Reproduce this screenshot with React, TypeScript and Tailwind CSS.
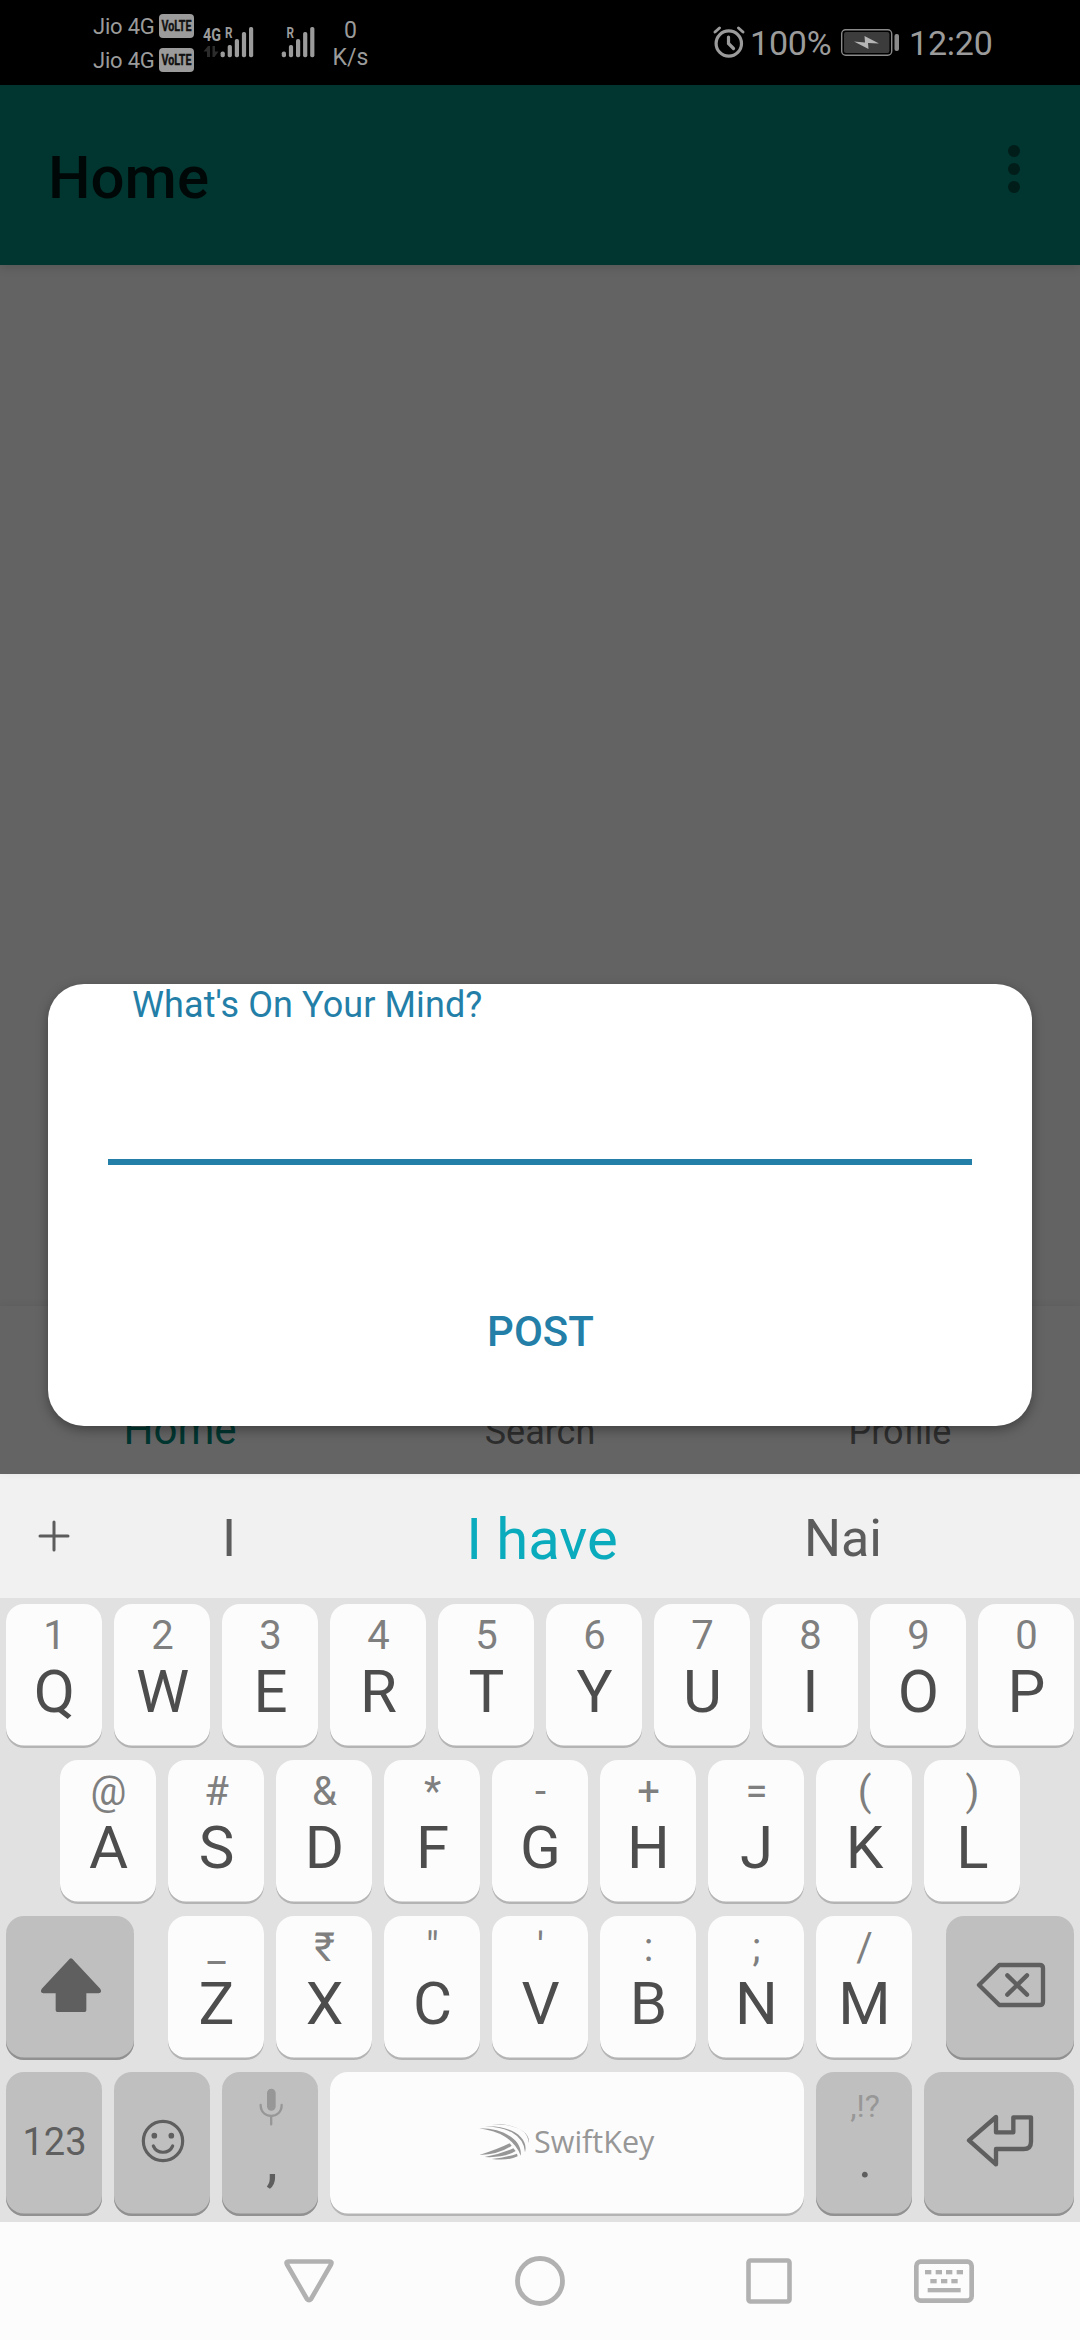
import React from "react";
import clsx from "clsx";

const bars = [51.5, 45, 39, 32, 27];

function Bars({ x }: { x: number }) {
  return (
    <>
      {bars.map((y, i) => (
        <rect key={i} x={x + i * 7.1} y={y} width={4.2} height={57.3 - y} rx={1.8} />
      ))}
    </>
  );
}

function Carrier() {
  return (
    <div className="flex h-[34px] items-center justify-between">
      <span className="text-[22px] leading-[34px] tracking-[-0.2px] whitespace-nowrap">Jio 4G</span>
      <svg className="mt-[-2px] h-6 w-[35px] shrink-0 overflow-visible" viewBox="0 0 35 24">
        <rect width="35" height="24" rx="4" fill="#9b9b9b" />
        <text x="2.500" y="17" fontSize="14.500" fontWeight="700" fill="#111" stroke="#111" strokeWidth="0.400" textLength="30" lengthAdjust="spacingAndGlyphs">
          VoLTE
        </text>
      </svg>
    </div>
  );
}

function StatusBar() {
  return (
    <header className="flex h-[85px] shrink-0 bg-black pl-[93px] text-[#9b9b9b]">
      <div className="flex w-[101px] shrink-0 flex-col pt-[10px]">
        <Carrier />
        <Carrier />
      </div>
      <svg className="h-[85px] w-[126px]" viewBox="194 0 126 85" fill="#9b9b9b">
        <text x="203" y="40.500" fontSize="19" fontWeight="700" textLength="18" lengthAdjust="spacingAndGlyphs">4G</text>
        <text x="225" y="37.500" fontSize="15" fontWeight="700" textLength="7.500" lengthAdjust="spacingAndGlyphs">R</text>
        <path d="M203.500 51.500l4.500-5.500h2v11h-3v-5.500zM212.500 46h2.500v5.500h3.500l-4 5.500h-2z" fill="#2c2c2c" />
        <Bars x={220.6} />
        <text x="286.500" y="37.500" fontSize="15" fontWeight="700" textLength="7.500" lengthAdjust="spacingAndGlyphs">R</text>
        <Bars x={281.8} />
      </svg>
      <div className="flex w-[61px] flex-col pt-[17px] text-center text-[23px] leading-[27px]">
        <span>0</span>
        <span>K/s</span>
      </div>
      <div className="ml-auto flex h-[85px] items-center pr-[86px] text-[34px] leading-[80px]">
        <svg className="h-[85px] w-[34px]" viewBox="712 0 34 85" fill="none" stroke="#9b9b9b" strokeLinecap="round">
          <circle cx="728.800" cy="43.500" r="12.700" strokeWidth="3.200" />
          <path d="M728.500 37v6.500l5 5" strokeWidth="3.200" />
          <path d="M715 32l4.500-4M738.500 28l4.500 4" strokeWidth="3" />
        </svg>
        <span className="ml-[4px] w-[90px] pt-[1px] tracking-[-0.200px]">100%</span>
        <svg className="h-[85px] w-[60px]" viewBox="840 0 60 85">
          <rect x="841.700" y="29.700" width="50" height="25.600" rx="4" fill="none" stroke="#8a8a8a" strokeWidth="1.400" />
          <rect x="844" y="32" width="45.400" height="21" rx="2" fill="#3c3c3c" />
          <path d="M854 41.500l11 1-.5-6.500 14.500 7.500-11-.5.500 6z" fill="#b5b5b5" />
          <rect x="894.500" y="34" width="4.500" height="17" rx="2" fill="#8a8a8a" />
        </svg>
        <span className="ml-[9px] w-[85px] pt-[1px] tracking-[-0.200px]">12:20</span>
      </div>
    </header>
  );
}

function AppBar() {
  return (
    <div className="z-10 flex h-[180px] shrink-0 items-center justify-between bg-[#013630] pr-[60px] pl-[48px] shadow-[0_2px_10px_rgba(0,0,0,0.15)]">
      <h1 className="mt-[5px] text-[60px] leading-none font-medium text-[#000807]">Home</h1>
      <div className="mb-[12px] flex flex-col gap-[6px]">
        <i className="size-3 rounded-full bg-[#001d19]" />
        <i className="size-3 rounded-full bg-[#001d19]" />
        <i className="size-3 rounded-full bg-[#001d19]" />
      </div>
    </div>
  );
}

function PostDialog() {
  return (
    <div className="absolute top-[719px] left-[48px] flex h-[442px] w-[984px] flex-col rounded-[36px] bg-white px-[60px] text-[#237fa8] shadow-[0_4px_12px_rgba(0,0,0,0.35)]">
      <label className="h-[175px] pl-[24px] text-[36px] leading-[42px] tracking-[0.100px]">What's On Your Mind?</label>
      <div className="h-[6px] bg-[#237fa8]" />
      <button className="mt-[142px] pl-[1px] text-[42px] leading-[50px] font-medium">POST</button>
    </div>
  );
}

type KeyProps = { w: string; dark?: boolean; children: React.ReactNode };

function Key({ w, dark, children }: KeyProps) {
  return (
    <div
      className={clsx(
        "flex h-36 shrink-0 flex-col items-center rounded-[18px]",
        dark
          ? "bg-[#bfbfbf] shadow-[inset_0_-2.500px_0_#919191]"
          : "bg-[#fcfcfc] shadow-[inset_0_-2.500px_0_#b4b4b4]",
        w,
      )}
    >
      {children}
    </div>
  );
}

function LetterKey({ top, letter }: { top: string; letter: string }) {
  return (
    <Key w="w-24">
      <span className="mt-[12px] h-[40px] pl-[1px] text-[40px] leading-[40px] text-[#7f7f7f]">{top}</span>
      <span className="mt-[6px] pl-[1px] text-[60px] leading-[60px] text-[#4d4d4d]">{letter}</span>
    </Key>
  );
}

const row1 = ["1Q", "2W", "3E", "4R", "5T", "6Y", "7U", "8I", "9O", "0P"];
const row2 = ["@A", "#S", "&D", "*F", "-G", "+H", "=J", "(K", ")L"];
const row3 = ["_Z", "₹X", "\"C", "'V", ":B", ";N", "/M"];

const letters = (row: string[]) => row.map((k) => <LetterKey key={k} top={k[0]} letter={k[1]} />);

function Keyboard() {
  return (
    <section className="flex h-[748px] shrink-0 flex-col bg-[#e1e1e1]">
      <div className="flex h-[124px] shrink-0 items-center bg-[#f1f1f1] text-[52px] leading-none text-[#5c5c5c]">
        <svg className="h-[124px] w-[108px]" viewBox="0 0 108 124" stroke="#5c5c5c" strokeWidth="3" strokeLinecap="round">
          <path d="M40 62h28M54 48v28" />
        </svg>
        <span className="w-[242px] pt-[5px] text-center">I</span>
        <span className="w-[384px] pt-[6px] text-center text-[58px] text-[#0aabbd]">I have</span>
        <span className="w-[218px] pt-[5px] text-center">Nai</span>
      </div>
      <div className="flex flex-col gap-3 p-[6px]">
        <div className="flex gap-3">{letters(row1)}</div>
        <div className="flex gap-3 pl-[54px]">{letters(row2)}</div>
        <div className="flex justify-between">
          <Key w="w-32" dark>
            <svg className="h-full w-full" viewBox="18 78 384 432">
              <path d="M213 210L297 300q3 5-1 5h-42v56h-82v-56h-42q-4 0-1-5z" fill="#5f5f5f" stroke="#5f5f5f" strokeWidth="10" strokeLinejoin="round" />
            </svg>
          </Key>
          <div className="flex gap-3">{letters(row3)}</div>
          <Key w="w-32" dark>
            <svg className="h-full w-full" viewBox="498 78 384 432" fill="none" stroke="#5f5f5f" strokeWidth="13" strokeLinejoin="round" strokeLinecap="round">
              <path d="M597 285l61-60h121q10 0 10 10v100q0 10-10 10H658z" />
              <path d="M682 256l59 58M741 256l-59 58" />
            </svg>
          </Key>
        </div>
        <div className="flex gap-3">
          <Key w="w-24" dark>
            <span className="mt-[51px] pl-[1px] text-[38px] leading-[38px] text-[#5f5f5f]">123</span>
          </Key>
          <Key w="w-24" dark>
            <svg className="h-full w-full" viewBox="342 546 288 432" fill="none" stroke="#5f5f5f">
              <circle cx="489" cy="753" r="59" strokeWidth="9.500" />
              <circle cx="463" cy="737" r="8.500" fill="#5f5f5f" stroke="none" />
              <circle cx="514" cy="737" r="8.500" fill="#5f5f5f" stroke="none" />
              <path d="M460 768c11 25 47 25 58 0" strokeWidth="9.500" strokeLinecap="round" />
            </svg>
          </Key>
          <Key w="w-24" dark>
            <svg className="h-[57px] w-full shrink-0" viewBox="666 546 288 171" fill="none" stroke="#979797">
              <rect x="801" y="596" width="26" height="66" rx="13" fill="#979797" stroke="none" />
              <path d="M782 645c0 44 63 44 63 0M813.500 679v24" strokeWidth="7" strokeLinecap="round" />
            </svg>
            <span className="mt-[1px] pl-[4px] text-[60px] leading-[60px] text-[#5f5f5f]">,</span>
          </Key>
          <Key w="w-[474px]">
            <svg className="h-full w-full" viewBox="-330 66 1422 432" fill="#979797">
              <path d="M155 223C220 218 274 245 266 279Q265 242 220 230Q195 223 155 223Z" />
              <path d="M134 229C205 224 268 258 255 307Q253 268 214 246Q180 231 134 229Z" />
              <path d="M118 235C190 234 249 271 242 317Q230 283 195 260Q165 242 118 235Z" />
              <path d="M118 315Q170 299 209 280L215 287Q180 313 118 315Z" />
              <path d="M134 321Q182 312 220 295L227 303Q193 324 134 321Z" />
              <path d="M155 327Q195 323 231 311L233 319Q204 333 155 327Z" />
              <text x="282" y="309.500" fontFamily="'Open Sans'" fontWeight="400" fontSize="95" textLength="361" lengthAdjust="spacingAndGlyphs">
                SwiftKey
              </text>
            </svg>
          </Key>
          <Key w="w-24" dark>
            <span className="mt-[18px] pl-[2px] text-[32px] leading-[32px] text-[#979797]">,!?</span>
            <span className="mt-[13px] pl-[2px] text-[52px] leading-[50px] text-[#5f5f5f]">.</span>
          </Key>
          <Key w="w-[150px]" dark>
            <svg className="h-full w-full" viewBox="432 546 450 432" fill="none" stroke="#5f5f5f" strokeWidth="13" strokeLinejoin="round">
              <path d="M567 751l81-70v46h52v-45h53v73q0 22-22 22h-83v46z" />
            </svg>
          </Key>
        </div>
      </div>
    </section>
  );
}

function NavBar() {
  return (
    <nav className="flex h-[118px] shrink-0 items-center bg-[#fcfcfc] pl-[284px]">
      <svg className="h-[118px] w-[50px]" viewBox="284 2222 50 118" fill="none" stroke="#b1b1b1" strokeWidth="4.600" strokeLinejoin="round">
        <path d="M288.500 2261.500h41q3 0 1.500 3L311 2299q-2 2.500-4 0L287 2264.500q-1.500-3 1.500-3z" />
      </svg>
      <svg className="ml-[181px] h-[118px] w-[50px]" viewBox="0 0 50 118" fill="none" stroke="#b1b1b1" strokeWidth="4.800">
        <circle cx="25" cy="59" r="22.500" />
      </svg>
      <svg className="ml-[181px] h-[118px] w-[46px]" viewBox="0 0 46 118" fill="none" stroke="#b1b1b1" strokeWidth="4.600">
        <rect x="2.500" y="38.500" width="41" height="41" rx="2" />
      </svg>
      <svg className="ml-[122px] h-[118px] w-[60px]" viewBox="402 996 180 354" fill="#b1b1b1">
        <rect x="409" y="1115" width="166" height="117" rx="13" fill="none" stroke="#b1b1b1" strokeWidth="14" />
        {[435, 467, 498, 530].map((x) => (
          <rect key={x} x={x} y="1140" width="19" height="13" />
        ))}
        {[451, 483, 514].map((x) => (
          <rect key={x} x={x} y="1167" width="19" height="13" />
        ))}
        <rect x="443" y="1194" width="99" height="13" />
      </svg>
    </nav>
  );
}

export default function App() {
  return (
    <div className="flex h-[2340px] w-[1080px] flex-col overflow-hidden bg-[#636363] font-['Roboto',sans-serif]">
      <StatusBar />
      <AppBar />
      <main className="relative flex h-[1209px] shrink-0 flex-col">
        <div className="flex-1 bg-[#636363]" />
        <div className="flex h-[168px] items-end bg-[#646464] pb-[20px] text-center text-[36px] leading-[44px] text-[#2e2e2e] shadow-[0_-1px_8px_rgba(0,0,0,0.060)]">
          <span className="mb-[2px] w-[360px] text-[42px] text-[#013630]">Home</span>
          <span className="w-[360px]">Search</span>
          <span className="w-[360px]">Profile</span>
        </div>
        <PostDialog />
      </main>
      <Keyboard />
      <NavBar />
    </div>
  );
}
